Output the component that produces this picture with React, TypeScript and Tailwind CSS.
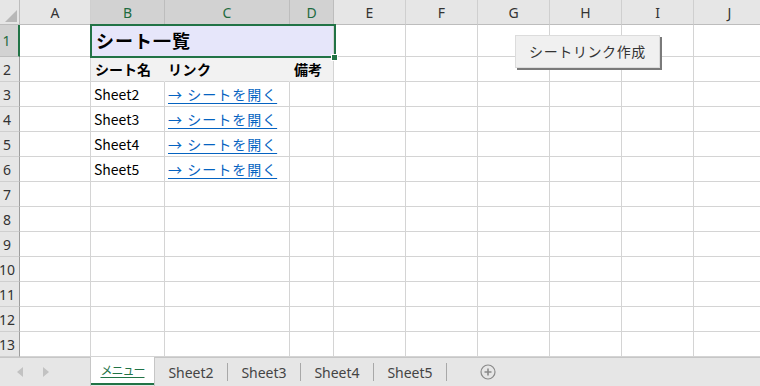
import React from 'react';

const cols = [
  { key: 'A', w: 71 },
  { key: 'B', w: 74 },
  { key: 'C', w: 125 },
  { key: 'D', w: 44 },
  { key: 'E', w: 72 },
  { key: 'F', w: 72 },
  { key: 'G', w: 72 },
  { key: 'H', w: 72 },
  { key: 'I', w: 72 },
  { key: 'J', w: 72 },
];

const sheets = ['Sheet2', 'Sheet3', 'Sheet4', 'Sheet5'];
const selectedCols = ['B', 'C', 'D'];

const jp = "font-['Noto_Sans_CJK_JP',sans-serif]";

function HeaderRow() {
  return (
    <>
      <div className="relative border-r border-b border-[#bdbdbd] bg-[#e6e6e6]">
        <svg className="absolute right-[2px] bottom-[2px]" width="12" height="12" viewBox="0 0 12 12">
          <polygon points="12,0 12,12 0,12" fill="#b8b8b8" />
        </svg>
      </div>
      {cols.map((c) => {
        const sel = selectedCols.includes(c.key);
        return (
          <div
            key={c.key}
            className={`flex items-center justify-center border-b border-r text-[14px] font-['Noto_Sans',sans-serif] ${
              sel
                ? 'bg-[#d2d2d2] border-b-[#9e9e9e] border-r-[#bdbdbd] text-[#1e6b40]'
                : 'bg-[#e6e6e6] border-b-[#bdbdbd] border-r-[#cfcfcf] text-[#333]'
            }`}
          >
            {c.key}
          </div>
        );
      })}
    </>
  );
}

function RowHead({ n, sel }: { n: number; sel?: boolean }) {
  return (
    <div
      className={`flex items-center justify-center pr-[5px] overflow-visible whitespace-nowrap border-b text-[14px] font-['Noto_Sans',sans-serif] ${
        sel
          ? 'bg-[#d2d2d2] border-r-2 border-r-[#217346] border-b-[#bdbdbd] text-[#1e6b40]'
          : 'bg-[#e6e6e6] border-r border-r-[#9e9e9e] border-b-[#cfcfcf] text-[#333]'
      }`}
    >
      {n}
    </div>
  );
}

function Cell({ children, className = '' }: { children?: React.ReactNode; className?: string }) {
  return (
    <div className={`flex items-center overflow-visible whitespace-nowrap border-r border-b border-[#d4d4d4] text-[14px] ${className}`}>
      {children}
    </div>
  );
}

function EmptyRest({ from }: { from: number }) {
  return (
    <>
      {cols.slice(from).map((c) => (
        <Cell key={c.key} />
      ))}
    </>
  );
}

export default function App() {
  return (
    <div className={`w-[760px] h-[386px] overflow-hidden bg-white flex flex-col ${jp}`}>
      <div className="relative h-[357px] overflow-hidden">
        <div className="grid w-[766px] grid-cols-[20px_71px_74px_125px_44px_72px_72px_72px_72px_72px_72px] grid-rows-[25px_32px_repeat(12,25px)]">
          <HeaderRow />

          {/* row 1 */}
          <RowHead n={1} sel />
          <Cell />
          <Cell className="col-span-3 bg-[#e6e6fa] pl-[5px] text-[18px] tracking-[1px] font-bold text-black">シート一覧</Cell>
          <EmptyRest from={4} />

          {/* row 2 */}
          <RowHead n={2} />
          <Cell />
          <Cell className="bg-[#f2f2f2] border-r-[#f2f2f2] pl-[4px] font-bold text-black">シート名</Cell>
          <Cell className="bg-[#f2f2f2] border-r-[#f2f2f2] pl-[3px] tracking-[0.5px] font-bold text-black">リンク</Cell>
          <Cell className="bg-[#f2f2f2] pl-[4px] font-bold text-black">備考</Cell>
          <EmptyRest from={4} />

          {sheets.map((s, i) => (
            <React.Fragment key={s}>
              <RowHead n={i + 3} />
              <Cell />
              <Cell className="pl-[3px] text-black">{s}</Cell>
              <Cell className="pl-[3px]">
                <span className="text-[#0563c1] tracking-[1px] underline underline-offset-[3px] decoration-[1px]">→ シートを開く</span>
              </Cell>
              <Cell />
              <EmptyRest from={4} />
            </React.Fragment>
          ))}

          {[7, 8, 9, 10, 11, 12, 13].map((n) => (
            <React.Fragment key={n}>
              <RowHead n={n} />
              <EmptyRest from={0} />
            </React.Fragment>
          ))}
        </div>

        {/* selection */}
        <div className="absolute left-[90px] top-[24px] w-[246px] h-[34px] border-2 border-[#217346] pointer-events-none" />
        <div className="absolute left-[331px] top-[54px] w-[7px] h-[7px] bg-[#217346] border border-white" />

        {/* button */}
        <button className="absolute left-[515px] top-[35px] w-[145px] h-[33px] bg-[#f0f0f0] border border-[#dcdcdc] shadow-[2px_2px_0_#7a7a7a] text-[14px] tracking-[0.6px] text-[#333] flex items-center justify-center">
          シートリンク作成
        </button>
      </div>

      {/* sheet tabs */}
      <div className="relative flex h-[29px] items-stretch bg-[#e6e6e6] border-t border-[#c6c6c6] font-['Noto_Sans','Noto_Sans_CJK_JP',sans-serif] text-[14px] text-[#444]">
        <div className="flex w-[90px] items-center gap-[20px] pl-[17px]">
          <svg width="6" height="10" viewBox="0 0 6 10"><polygon points="6,0 6,10 0,5" fill="#c2c2c2" /></svg>
          <svg width="6" height="10" viewBox="0 0 6 10"><polygon points="0,0 0,10 6,5" fill="#c2c2c2" /></svg>
        </div>
        <div className="-mt-px flex w-[65px] flex-col border-x border-[#c6c6c6] bg-white">
          <div className={`flex flex-1 items-center justify-center text-[12px] tracking-[-1px] text-[#217346] ${jp}`}>
            <span className="underline underline-offset-[2px] decoration-[1px]">メニュー</span>
          </div>
          <div className="h-[2px] bg-[#217346]" />
          <div className="h-[1px] bg-[#e6e6e6]" />
        </div>
        {sheets.map((s) => (
          <div key={s} className="flex w-[73px] items-center">
            <span className="flex-1 text-center">{s}</span>
            <span className="h-[18px] w-px bg-[#a8a8a8]" />
          </div>
        ))}
        <div className="flex w-[82px] items-center justify-center">
          <svg width="16" height="16" viewBox="0 0 16 16">
            <circle cx="8" cy="8" r="7" fill="none" stroke="#8a8a8a" strokeWidth="1.2" />
            <path d="M8 4.5v7M4.5 8h7" stroke="#8a8a8a" strokeWidth="1.6" />
          </svg>
        </div>
      </div>
    </div>
  );
}
